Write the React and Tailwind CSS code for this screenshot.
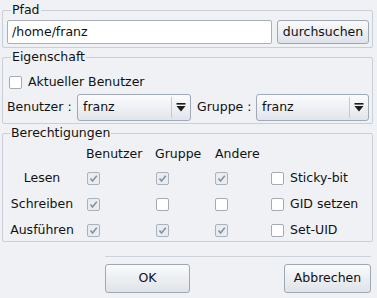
import React from 'react';

// Checkbox like the KDE style: white box, greyed tick when checked
function Check({ checked }) {
  return (
    <span
      className={`inline-flex items-center justify-center w-[13px] h-[13px] rounded-[2px] border shrink-0 ${
        checked ? 'border-[#aab2be] bg-[#e9ecf1]' : 'border-[#a3abb8] bg-white'
      }`}
    >
      {checked && (
        <svg width="9" height="9" viewBox="0 0 9 9">
          <polyline points="1.5,4.5 3.5,7 7.8,1.8" fill="none" stroke="#8690a1" strokeWidth="1.6" />
        </svg>
      )}
    </span>
  );
}

function Combo({ value, className }) {
  return (
    <div
      className={`flex items-stretch h-[27px] rounded-[3px] border border-[#a0a9b6] bg-gradient-to-b from-[#fbfcfd] to-[#e1e5eb] ${className}`}
    >
      <div className="flex-1 flex items-center pl-[5px]">{value}</div>
      <div className="my-[2px] border-l border-[#c3c9d2]" />
      <div className="w-[18px] flex items-center justify-center">
        <svg width="10" height="9" viewBox="0 0 10 9">
          <rect x="0.5" y="0" width="9" height="1.6" fill="#1c1c1c" />
          <polygon points="0.5,3 9.5,3 5,8.5" fill="#1c1c1c" />
        </svg>
      </div>
    </div>
  );
}

function Group({ title, className, children }) {
  return (
    <fieldset className={`border border-[#c9cfd8] rounded-[2px] ${className}`}>
      <legend className="ml-[4px] px-px leading-[14px]">{title}</legend>
      {children}
    </fieldset>
  );
}

const rows = [
  { label: 'Lesen', cells: [true, true, true], extra: 'Sticky-bit' },
  { label: 'Schreiben', cells: [true, false, false], extra: 'GID setzen' },
  { label: 'Ausführen', cells: [true, true, true], extra: 'Set-UID' },
];

export default function App() {
  return (
    <div
      className="w-[377px] h-[298px] bg-[#eff1f5] text-[12.5px] text-[#111] pl-[2px] pr-[4px] pt-[3px] overflow-hidden"
      style={{ fontFamily: '"DejaVu Sans", Verdana, sans-serif' }}
    >
      <Group title="Pfad" className="pl-[4px] pr-[3px] pt-[3px] pb-[3px]">
        <div className="flex gap-[5px]">
          <div className="flex-1 h-[24px] flex items-center px-[4px] bg-white border border-[#a8b0bd] rounded-[2px]">
            /home/franz
          </div>
          <button className="w-[92px] h-[24px] rounded-[3px] border border-[#9ea7b4] bg-gradient-to-b from-[#f9fafb] to-[#dfe3e9]">
            durchsuchen
          </button>
        </div>
      </Group>

      <Group title="Eigenschaft" className="mt-[2px] pl-[4px] pr-[3px] pt-[10px] pb-[2px]">
        <div className="h-[16px] flex items-center gap-[6px] pl-[2px]">
          <Check checked={false} />
          <span>Aktueller Benutzer</span>
        </div>
        <div className="mt-[4px] flex items-center">
          <span className="w-[70px] whitespace-pre">Benutzer :</span>
          <Combo value="franz" className="w-[114px]" />
          <span className="ml-[6px] w-[59px] whitespace-pre">Gruppe :</span>
          <Combo value="franz" className="flex-1" />
        </div>
      </Group>

      <Group title="Berechtigungen" className="mt-[2px] pl-[3px] pt-[5px] pb-0">
        <div className="grid grid-cols-[80px_69px_59px_57px_1fr] grid-rows-[18px_22px_22px_22px] gap-y-[4px] items-center">
          <span />
          <span>Benutzer</span>
          <span>Gruppe</span>
          <span className="pl-px">Andere</span>
          <span />
          {rows.map((r) => (
            <React.Fragment key={r.label}>
              <span className="pr-[8px] text-center">{r.label}</span>
              {r.cells.map((c, i) => (
                <span key={i} className="flex pl-px">
                  <Check checked={c} />
                </span>
              ))}
              <span className="flex items-center gap-[6px]">
                <Check checked={false} />
                <span>{r.extra}</span>
              </span>
            </React.Fragment>
          ))}
        </div>
      </Group>

      <div className="ml-[103px] mr-[2px] mt-[14px] border-t border-[#cdd2da]" />
      <div className="ml-[103px] mr-[2px] mt-[7px] flex justify-between">
        <button className="w-[85px] h-[29px] rounded-[3px] border border-[#9ea7b4] bg-gradient-to-b from-[#f9fafb] to-[#dfe3e9]">
          OK
        </button>
        <button className="w-[87px] h-[29px] rounded-[3px] border border-[#9ea7b4] bg-gradient-to-b from-[#f9fafb] to-[#dfe3e9]">
          Abbrechen
        </button>
      </div>
    </div>
  );
}
